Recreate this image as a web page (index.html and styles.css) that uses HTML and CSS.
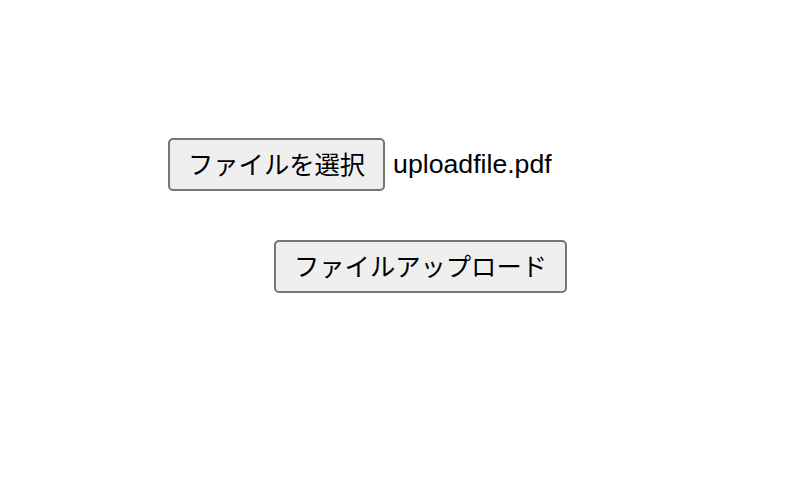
FILE: index.html
```html
<!DOCTYPE html>
<html lang="ja">
<head>
<meta charset="utf-8">
<title>ファイルアップロード</title>
<link rel="stylesheet" href="styles.css">
</head>
<body>
<form class="upload-form">
  <div class="file-row">
    <button type="button" class="btn">ファイルを選択</button>
    <span class="file-name">uploadfile.pdf</span>
  </div>
  <div class="submit-row">
    <button type="submit" class="btn">ファイルアップロード</button>
  </div>
</form>
</body>
</html>
```

FILE: styles.css
```css
html, body {
  margin: 0;
  padding: 0;
  background: #ffffff;
}
body {
  font-family: "Liberation Sans", "Noto Sans CJK JP", sans-serif;
  color: #000000;
}
.upload-form {
  display: flex;
  flex-direction: column;
  padding-top: 138px;
}
.file-row {
  display: flex;
  align-items: center;
  gap: 8px;
  padding-left: 168px;
}
.submit-row {
  display: flex;
  padding-left: 274px;
  margin-top: 49px;
}
.btn {
  box-sizing: border-box;
  height: 53px;
  padding: 0 18px 4px;
  font-family: "Noto Sans CJK JP", sans-serif;
  font-size: 25.3px;
  color: #000000;
  background: #efefef;
  border: 2px solid #767676;
  border-radius: 5px;
  display: flex;
  align-items: center;
}
.file-name {
  font-size: 26.67px;
  font-family: "Liberation Sans", "Noto Sans CJK JP", sans-serif;
}
```
